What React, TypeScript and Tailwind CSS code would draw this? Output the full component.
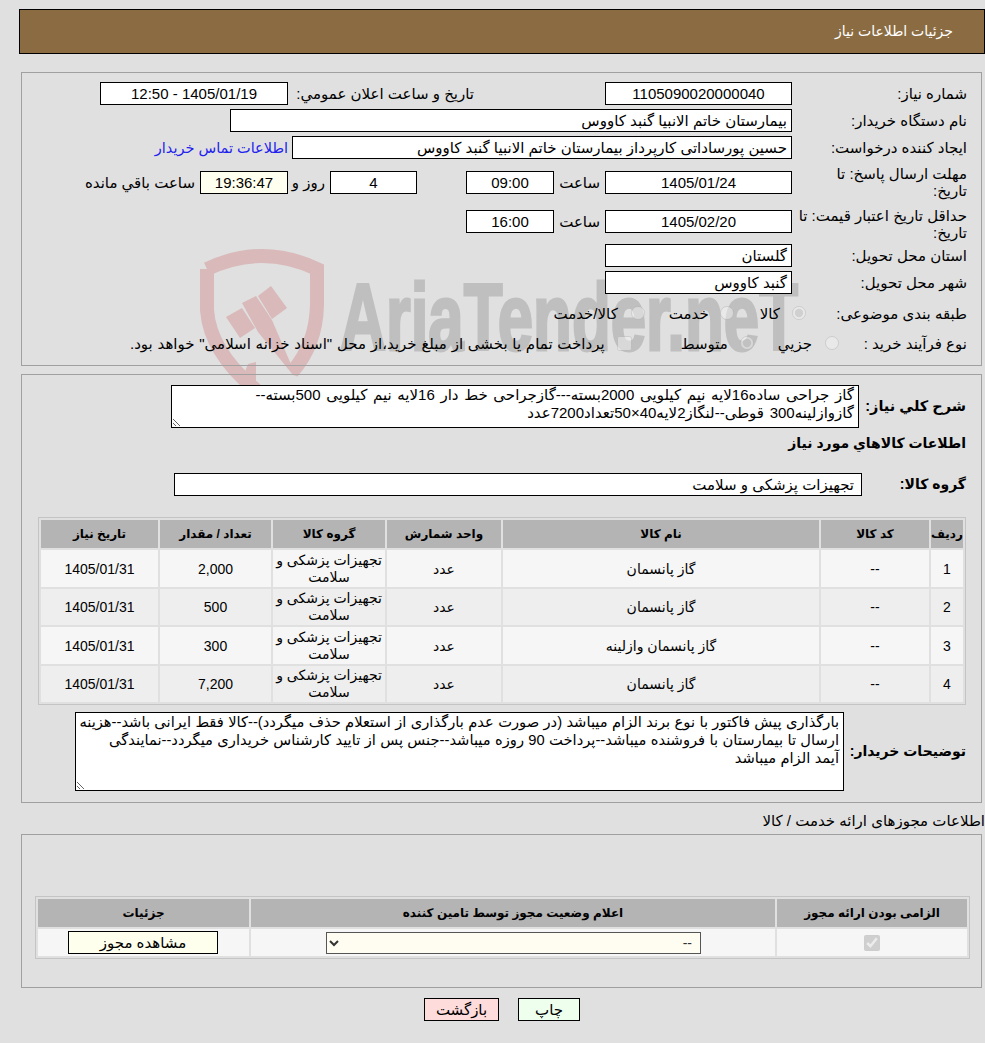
import type { ReactNode } from 'react'

const fieldText = 'h-[23px] border border-black leading-[21px] px-1 text-[15px]'

function Box({ w, center, tint, children }: { w: string; center?: boolean; tint?: boolean; children: ReactNode }) {
  return (
    <div className={`${fieldText} ${w} shrink-0 ${center ? 'text-center' : 'text-right'} ${tint ? 'bg-[#fffff0]' : 'bg-white'}`}>
      {children}
    </div>
  )
}

function Watermark() {
  return (
    <svg dir="ltr" className="absolute left-0 top-0 -z-10 h-[420px] w-[985px]" viewBox="0 0 985 420">
      <g fill="none" stroke="#d9b9b9" strokeWidth="14">
        <path d="M207 269 Q262 243 317 269 L317 305 Q316 345 292 372" />
        <path d="M207 269 L207 310 Q210 352 256 390" />
      </g>
      <g fill="#d9b9b9">
        <polygon points="226,317 242,308 255,328 240,338" />
        <polygon points="242,303 256,296 272,320 296,376 293,375 258,332" />
        <polygon points="258,296 271,286 287,308 272,319" />
        <polygon points="248,364 256,362 256,386 240,384" />
      </g>
      <text
        x="340"
        y="350"
        direction="ltr"
        textAnchor="start"
        textLength="458"
        lengthAdjust="spacingAndGlyphs"
        fontFamily="'Liberation Sans', sans-serif"
        fontWeight="700"
        fontSize="94"
        fill="#bfbfbf"
        stroke="#bfbfbf"
        strokeWidth="3"
      >
        AriaTender.neT
      </text>
    </svg>
  )
}

const rows = [
  { n: 1, name: 'گاز پانسمان', qty: '2,000', h: 'h-[37px]', bg: 'bg-[#f6f6f6]' },
  { n: 2, name: 'گاز پانسمان', qty: '500', h: 'h-[36px]', bg: 'bg-[#eeeeee]' },
  { n: 3, name: 'گاز پانسمان وازلینه', qty: '300', h: 'h-[37px]', bg: 'bg-[#f6f6f6]' },
  { n: 4, name: 'گاز پانسمان', qty: '7,200', h: 'h-[36px]', bg: 'bg-[#eeeeee]' },
]

const th = 'bg-[#b4b4b4] text-[12px] font-bold text-center h-[28px] p-0'

function GoodsTable() {
  return (
    <table className="ml-[15px] mr-[15px] mt-[21px] table-fixed border-separate border-spacing-[2px] border border-[#c4c4c4] w-[928px]">
      <colgroup>
        <col className="w-[32px]" />
        <col className="w-[108px]" />
        <col className="w-[316px]" />
        <col className="w-[114px]" />
        <col className="w-[112px]" />
        <col className="w-[111px]" />
        <col className="w-[117px]" />
      </colgroup>
      <thead>
        <tr>
          <th className={th}>ردیف</th>
          <th className={th}>کد کالا</th>
          <th className={th}>نام کالا</th>
          <th className={th}>واحد شمارش</th>
          <th className={th}>گروه کالا</th>
          <th className={th}>تعداد / مقدار</th>
          <th className={th}>تاریخ نیاز</th>
        </tr>
      </thead>
      <tbody>
        {rows.map((r) => (
          <tr key={r.n} className={`${r.h} ${r.bg} text-center`}>
            <td className="p-0 pt-px">{r.n}</td>
            <td className="p-0 pt-px">--</td>
            <td className="p-0 pt-px">{r.name}</td>
            <td className="p-0 pt-px">عدد</td>
            <td className="p-0 leading-[17px]">تجهیزات پزشکی و سلامت</td>
            <td className="p-0 pt-px">{r.qty}</td>
            <td className="p-0 pt-px">1405/01/31</td>
          </tr>
        ))}
      </tbody>
    </table>
  )
}

function PermitTable() {
  return (
    <table className="ml-[13px] mr-[11px] mt-[61px] table-fixed border-separate border-spacing-[2px] border border-[#c4c4c4] w-[935px]">
      <colgroup>
        <col className="w-[190px]" />
        <col className="w-[524px]" />
        <col className="w-[211px]" />
      </colgroup>
      <thead>
        <tr>
          <th className={th}>الزامی بودن ارائه مجوز</th>
          <th className={th}>اعلام وضعیت مجوز توسط تامین کننده</th>
          <th className={th}>جزئیات</th>
        </tr>
      </thead>
      <tbody>
        <tr className="h-[27px] bg-[#f6f6f6] text-center">
          <td className="p-0">
            <input type="checkbox" checked readOnly disabled className="align-middle size-[16px]" />
          </td>
          <td className="p-0">
            <select
              disabled
              className="mr-[74px] block h-[22px] w-[375px] rounded-none border border-[#555] bg-[#fffdf2] text-[#333] opacity-100 px-1"
            >
              <option>--</option>
            </select>
          </td>
          <td className="p-0">
            <button className="mr-[31px] block h-[23px] w-[150px] border border-black bg-[#ffffee] text-[15px] leading-[21px]">
              مشاهده مجوز
            </button>
          </td>
        </tr>
      </tbody>
    </table>
  )
}

export default function App() {
  return (
    <div
      dir="rtl"
      className="relative isolate min-h-screen overflow-hidden bg-[#e0e0e0] pl-[19px] pt-[9px] text-[14px] text-black [font-family:'Liberation_Sans','DejaVu_Sans',sans-serif]"
    >
      <Watermark />

      <header className="flex h-[45px] items-center border border-black bg-[#8b6c42] pr-[31px] text-[14px] text-white">
        جزئیات اطلاعات نیاز
      </header>

      <section className="ml-[2px] mr-[3px] mt-[18px] border border-[#a0a0a0] pb-[12px] pr-[14px] pt-[9px] text-[15px] leading-[17px]">
        <div className="flex">
          <div className="w-[175px] shrink-0 pt-[3px]">شماره نیاز:</div>
          <Box w="w-[187px]" center>1105090020000040</Box>
          <div className="mr-[131px] w-[186px] shrink-0 pt-[3px]">تاریخ و ساعت اعلان عمومي:</div>
          <Box w="w-[188px]" center>1405/01/19 - 12:50</Box>
        </div>
        <div className="mt-[4px] flex">
          <div className="w-[175px] shrink-0 pt-[3px]">نام دستگاه خریدار:</div>
          <Box w="w-[562px]">بیمارستان خاتم الانبیا گنبد کاووس</Box>
        </div>
        <div className="mt-[4px] flex">
          <div className="w-[175px] shrink-0 pt-[3px]">ایجاد کننده درخواست:</div>
          <Box w="w-[500px]">حسین پورساداتی کارپرداز بیمارستان خاتم الانبیا گنبد کاووس</Box>
          <a href="#" className="mr-[4px] pt-[4px] text-[14.5px] text-[#2222ee]">اطلاعات تماس خریدار</a>
        </div>
        <div className="mt-[6px] flex items-center">
          <div className="w-[175px] shrink-0 pl-[15px]">مهلت ارسال پاسخ: تا تاریخ:</div>
          <Box w="w-[187px]" center>1405/01/24</Box>
          <div className="w-[51px] shrink-0 pr-[5px]">ساعت</div>
          <Box w="w-[88px]" center>09:00</Box>
          <div className="w-[49px] shrink-0" />
          <Box w="w-[87px]" center>4</Box>
          <div className="w-[42px] shrink-0 pr-[5px]">روز و</div>
          <Box w="w-[88px]" center tint>19:36:47</Box>
          <div className="mr-[5px]">ساعت باقي مانده</div>
        </div>
        <div className="mt-[8px] flex items-start">
          <div className="w-[175px] shrink-0">حداقل تاریخ اعتبار قیمت: تا تاریخ:</div>
          <div className="mt-[3px] flex">
            <Box w="w-[187px]" center>1405/02/20</Box>
            <div className="w-[51px] shrink-0 pr-[5px] pt-[3px]">ساعت</div>
            <Box w="w-[88px]" center>16:00</Box>
          </div>
        </div>
        <div className="mt-[3px] flex">
          <div className="w-[175px] shrink-0 pt-[3px]">استان محل تحویل:</div>
          <Box w="w-[187px]">گلستان</Box>
        </div>
        <div className="mt-[4px] flex">
          <div className="w-[175px] shrink-0 pt-[3px]">شهر محل تحویل:</div>
          <Box w="w-[187px]">گنبد کاووس</Box>
        </div>
        <div className="mt-[9px] flex h-[20px] items-center">
          <div className="w-[161px] shrink-0">طبقه بندی موضوعی:</div>
          <input type="radio" name="cat" checked readOnly disabled className="m-0 size-[14px] shrink-0 opacity-70" />
          <span className="mr-[12px]">کالا</span>
          <input type="radio" name="cat2" disabled className="m-0 mr-[26px] size-[14px] shrink-0 opacity-70" />
          <span className="mr-[11px]">خدمت</span>
          <input type="radio" name="cat3" disabled className="m-0 mr-[24px] size-[14px] shrink-0 opacity-70" />
          <span className="mr-[13px]">کالا/خدمت</span>
        </div>
        <div className="mt-[10px] flex h-[20px] items-center">
          <div className="w-[128px] shrink-0">نوع فرآیند خرید :</div>
          <input type="radio" name="buy1" disabled className="m-0 size-[14px] shrink-0 opacity-70" />
          <span className="mr-[13px]">جزيي</span>
          <input type="radio" name="buy2" checked readOnly disabled className="m-0 mr-[24px] size-[14px] shrink-0 opacity-70" />
          <span className="mr-[12px]">متوسط</span>
          <input type="checkbox" disabled className="m-0 mr-[49px] size-[15px] shrink-0 opacity-70" />
          <span className="mr-[12px] [word-spacing:0.6px]">پرداخت تمام یا بخشی از مبلغ خرید،از محل "اسناد خزانه اسلامی" خواهد بود.</span>
        </div>
      </section>

      <section className="ml-[2px] mr-[3px] mt-[8px] border border-[#a0a0a0] pb-[11px] pt-[10px]">
        <div className="flex items-center pr-[15px]">
          <div className="w-[107px] shrink-0 text-[14.5px] font-bold">شرح كلي نياز:</div>
          <textarea
            readOnly
            wrap="off"
            className="block h-[43px] w-[688px] overflow-hidden border border-black bg-white px-1 text-[15px] leading-[18px] [word-spacing:1.5px]"
            value={'گاز جراحی ساده16لایه نیم کیلویی 2000بسته---گازجراحی خط دار 16لایه نیم کیلویی 500بسته--\nگازوازلینه300 قوطی--لنگاز2لایه40×50تعداد7200عدد'}
          />
        </div>
        <div className="mt-[5px] pr-[15px] text-[14px] font-bold leading-[20px]">اطلاعات کالاهاي مورد نياز</div>
        <div className="mt-[20px] flex items-center pr-[15px]">
          <div className="w-[104px] shrink-0 text-[14px] font-bold">گروه کالا:</div>
          <Box w="w-[688px]"><span className="pr-[3px]">تجهیزات پزشکی و سلامت</span></Box>
        </div>
        <GoodsTable />
        <div className="mt-[7px] flex items-center pr-[15px]">
          <div className="w-[122px] shrink-0 whitespace-nowrap text-[14px] font-bold">توضیحات خریدار:</div>
          <textarea
            readOnly
            wrap="off"
            className="block h-[79px] w-[769px] overflow-hidden border border-black bg-white px-1 text-[14.7px] leading-[18px] [word-spacing:0.3px]"
            value={'بارگذاری پیش فاکتور با نوع برند الزام میباشد (در صورت عدم بارگذاری از استعلام حذف میگردد)--کالا فقط ایرانی باشد--هزینه\nارسال تا بیمارستان با فروشنده میباشد--پرداخت 90 روزه میباشد--جنس پس از تایید کارشناس خریداری میگردد--نمایندگی\nآیمد الزام میباشد'}
          />
        </div>
      </section>

      <div className="mt-[8px] h-[20px] text-[15px] leading-[20px]">اطلاعات مجوزهای ارائه خدمت / کالا</div>

      <section className="ml-[2px] mr-[3px] mt-[3px] border border-[#a0a0a0] pb-[28px]">
        <PermitTable />
      </section>

      <div className="mt-[10px] flex justify-center gap-[19px]">
        <button className="h-[23px] w-[62px] border border-black bg-[#eeffee] text-[15px] leading-[21px]">چاپ</button>
        <button className="h-[23px] w-[75px] border border-black bg-[#ffdcdc] text-[15px] leading-[21px]">بازگشت</button>
      </div>
    </div>
  )
}
